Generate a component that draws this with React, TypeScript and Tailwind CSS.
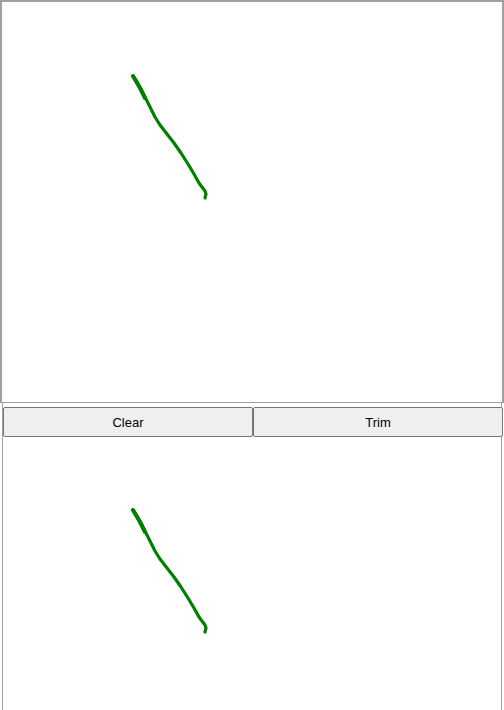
import React from "react";

const strokePath = (dx: number, dy: number) => {
  const pts: [number, number][] = [
    [133, 76],
    [137, 82],
    [141, 89],
    [145, 97],
    [150, 107],
    [155, 117],
    [160, 125],
    [167, 134],
    [174, 143],
    [181, 153],
    [188, 164],
    [194, 174],
    [199, 183],
    [202, 187],
    [205, 191],
    [206, 194],
    [205, 198],
  ];
  return pts
    .map(([x, y], i) => `${i === 0 ? "M" : "L"}${x - dx} ${y - dy}`)
    .join(" ");
};

const Stroke: React.FC<{ dx: number; dy: number }> = ({ dx, dy }) => (
  <svg className="absolute inset-0 w-full h-full" xmlns="http://www.w3.org/2000/svg">
    <path
      d={strokePath(dx, dy)}
      fill="none"
      stroke="#008000"
      strokeWidth={3.2}
      strokeLinecap="round"
      strokeLinejoin="round"
    />
    <path
      d={`M${133 - dx} ${76 - dy} L${140 - dx} ${88 - dy} L${145 - dx} ${98 - dy}`}
      fill="none"
      stroke="#008000"
      strokeWidth={4}
      strokeLinecap="round"
    />
  </svg>
);

export default function App() {
  return (
    <div className="w-[504px] h-[710px] overflow-hidden bg-white" style={{ fontFamily: '"Liberation Sans", Arial, sans-serif' }}>
      <div className="relative w-[504px] h-[403px] border-t-2 border-x-2 border-b border-[#a0a0a0]">
        <Stroke dx={2} dy={2} />
      </div>
      <div className="ml-[2px] w-[500px] h-[307px] border-x border-[#a0a0a0] flex flex-col">
        <div className="flex pt-[4px] h-[34px]">
          <button className="shrink-0 w-[250px] h-[30px] pt-[1px] bg-[#efefef] border border-[#767676] rounded-[2px] text-[13px] text-black">
            Clear
          </button>
          <button className="shrink-0 w-[250px] h-[30px] pt-[1px] bg-[#efefef] border border-[#767676] rounded-[2px] text-[13px] text-black">
            Trim
          </button>
        </div>
        <div className="relative flex-1">
          <Stroke dx={3} dy={3} />
        </div>
      </div>
    </div>
  );
}
